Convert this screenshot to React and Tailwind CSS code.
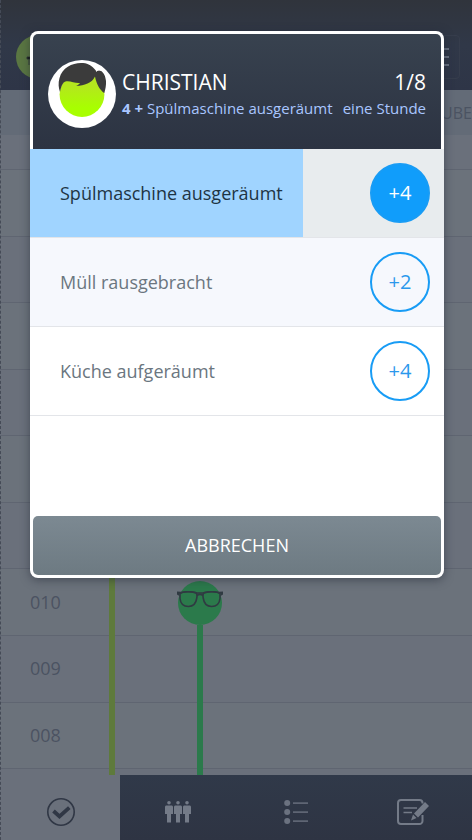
import React from "react";

const tasks = [
  { name: "Spülmaschine ausgeräumt", points: 4, progress: 66, active: true },
  { name: "Müll rausgebracht", points: 2, shaded: true },
  { name: "Küche aufgeräumt", points: 4 },
];

const scores = ["", "", "", "", "", "", "010", "009", "008"];

const Avatar = () => (
  <svg width="68" height="68" viewBox="0 0 68 68" className="shrink-0" aria-hidden="true">
    <defs>
      <linearGradient id="face" x1="0" y1="0" x2="0" y2="1">
        <stop offset="0.3" stopColor="#b4e61e" />
        <stop offset="0.8" stopColor="#a8ff00" />
      </linearGradient>
    </defs>
    <circle cx="34" cy="34" r="34" fill="#fff" />
    <circle cx="34" cy="34.5" r="22.4" fill="url(#face)" />
    <path
      fill="#3b3b3b"
      d="M12 32C10.500 28 10 23 11.500 18C14 8 24 3 33 3C39 3 43 5 46 8.500C47 9.500 47.800 10.500 48.500 11.500C49.500 10.500 51 10.200 52.500 10.800C55.500 12 57.500 16 58 21C58.200 25.500 57.500 29 56.300 33C53 31 50 26.500 48.500 22C47.800 20 47.300 18.500 47 16.500C45.500 20 43 22 39.500 23.500C36 25 32.500 25.800 28 26C29.500 25.300 31 24.500 32 23C27 23.500 22 20.500 17.500 21.500C14.500 22.500 13 27 12 32z"
    />
    <path d="M48 11.500C49.500 9.500 51.500 9.500 53 10.500" stroke="#fff" strokeWidth="0.8" fill="none" />
  </svg>
);

const GlassesHead = () => (
  <svg width="48" height="44" viewBox="0 0 48 44" aria-hidden="true">
    <circle cx="24" cy="22" r="22" fill="#2b7a4b" />
    <g fill="none" stroke="#303a42" strokeWidth="1.6">
      <path d="M4 12.500C7 10.300 15 10.300 19.500 11.500C21 12 21.300 14 20.800 17C20 22.500 17.500 25.500 12.500 25.500C7.500 25.500 4.500 22.500 4 17.500z" />
      <path d="M44 12.500C41 10.300 33 10.300 28.500 11.500C27 12 26.700 14 27.200 17C28 22.500 30.500 25.500 35.500 25.500C40.500 25.500 43.500 22.500 44 17.500z" />
      <path d="M21 14.500C23 13 25 13 27 14.500" />
    </g>
    <path
      d="M1 10.500L5 10.800C10 9.500 16 9.800 21 11.300H27C32 9.800 38 9.500 43 10.800L47 10.500V13.500L44.500 15V12.500C39 11 33 11 28 12.800H20C15 11 9 11 3.500 12.500V15L1 13.500z"
      fill="#303a42"
    />
  </svg>
);

const CheckIcon = () => (
  <svg width="28" height="28" viewBox="0 0 28 28" fill="none" stroke="#303745" aria-hidden="true">
    <circle cx="14" cy="14" r="13.200" strokeWidth="1.6" />
    <path d="M6.500 13l6 5.500 9.800-8.800" strokeWidth="3.8" />
  </svg>
);

const PeopleIcon = () => (
  <svg width="26" height="22" viewBox="0 0 26 22" fill="#747b88" aria-hidden="true">
    {[0, 9, 18].map((x) => (
      <g key={x} transform={`translate(${x} 0)`}>
        <circle cx="4" cy="1.8" r="1.8" />
        <path d="M1.500 4.500h5c.9 0 1.500.6 1.500 1.500v7H6v8.500H2V13H0V6c0-.9.6-1.500 1.500-1.500z" />
      </g>
    ))}
  </svg>
);

const ListIcon = () => (
  <svg width="24" height="24" viewBox="0 0 24 24" fill="#6b7280" aria-hidden="true">
    {[3, 12, 21].map((y) => (
      <g key={y}>
        <circle cx="3.2" cy={y} r="3" />
        <rect x="9" y={y - 0.6} width="15" height="1.4" />
      </g>
    ))}
  </svg>
);

const EditIcon = () => (
  <svg width="32" height="26" viewBox="0 0 32 26" aria-hidden="true">
    <path
      d="M25.500 4.500V4a3 3 0 0 0-3-3H4a3 3 0 0 0-3 3v18a3 3 0 0 0 3 3h18.500a3 3 0 0 0 3-3v-6"
      fill="none"
      stroke="#747b88"
      strokeWidth="2"
    />
    <path d="M6.500 9H20M6.500 13.500H15" stroke="#747b88" strokeWidth="1.5" />
    <path d="M28 3l4 4L21 18.500l-4-4zM16 15.500l3.500 3.500-5.500 2.500z" fill="#747b88" />
  </svg>
);

const Header = () => (
  <header className="flex h-[90px] items-center justify-between bg-linear-to-b from-[#30343c] via-[#303848] to-[#2e3547] pt-6 pr-3 pl-4">
    <svg width="44" height="44" viewBox="0 0 44 44" aria-hidden="true">
      <circle cx="22" cy="22" r="22" fill="#5a7642" />
      <path d="M11 22h8v2h-8zM13 24v6" stroke="#303a36" strokeWidth="1" />
    </svg>
    <button type="button" aria-label="Menü" className="flex h-11 w-14 flex-col items-end justify-center gap-1.5 rounded border border-[#363d4c] pr-2.5">
      <span className="h-0.5 w-6 bg-[#687080]" />
      <span className="h-0.5 w-6 bg-[#687080]" />
      <span className="h-0.5 w-6 bg-[#687080]" />
    </button>
  </header>
);

const Chart = () => (
  <main className="relative flex flex-1 flex-col bg-[#6a707b]">
    <div className="h-[35px] border-b border-[#5f6571]" />
    {scores.map((score, i) => (
      <div
        key={i}
        className="flex flex-[1_1_0px] items-center border-b border-[#5f6571] pl-[30px] text-[18px] text-[#4b5362] even:bg-[#6b727b]"
      >
        {score}
      </div>
    ))}
    <div className="h-1.5" />

    {/* score bars */}
    <div className="absolute inset-y-0 left-[68px] flex items-end">
      <div className="flex h-4/5 w-[88px] justify-center">
        <div className="w-1.5 bg-[#5e7a3c]" />
      </div>
      <div className="flex h-[194px] w-[88px] flex-col items-center">
        <GlassesHead />
        <div className="w-1.5 flex-1 bg-[#2b7a4b]" />
      </div>
    </div>
  </main>
);

const navItems = [
  { label: "Aufgaben", icon: <CheckIcon />, active: true },
  { label: "Gruppe", icon: <PeopleIcon /> },
  { label: "Liste", icon: <ListIcon /> },
  { label: "Bearbeiten", icon: <EditIcon /> },
];

const BottomNav = () => (
  <nav className="grid h-[65px] grid-cols-4 pl-0.5">
    {navItems.map((item) => (
      <button
        key={item.label}
        type="button"
        aria-label={item.label}
        className={`flex items-center justify-center pt-2 ${
          item.active ? "bg-[#6a707b]" : "bg-linear-to-b from-[#303949] to-[#2e3443]"
        }`}
      >
        {item.icon}
      </button>
    ))}
  </nav>
);

const TaskRow = ({ task }) => (
  <li
    className={`relative flex h-[89px] items-center justify-between border-b border-[#e3e5e9] pr-3.5 pl-[30px] ${
      task.active ? "bg-[#e8ecee]" : task.shaded ? "bg-[#f6f8fd]" : "bg-white"
    }`}
  >
    {task.progress && (
      <div className="absolute inset-y-0 left-0 bg-[#a0d4ff]" style={{ width: `${task.progress}%` }} />
    )}
    <span className={`relative text-[18px] ${task.active ? "text-[#1e3444]" : "text-[#6b7680]"}`}>{task.name}</span>
    <button
      type="button"
      className={`relative h-[60px] w-[60px] rounded-full border-2 border-[#189cf5] text-[20px] font-medium ${
        task.active ? "bg-[#109dfb] text-white" : "text-[#2b98ec]"
      }`}
    >
      +{task.points}
    </button>
  </li>
);

const TaskDialog = () => (
  <div className="absolute inset-x-0 top-0 pt-[31px] pr-7 pl-[30px]">
    <div
      role="dialog"
      aria-label="Christian"
      className="rounded-lg bg-white py-[3px] shadow-[0_2px_10px_rgba(30,35,50,0.5)]"
    >
      <div className="mx-[3px] flex h-[115px] items-center rounded-t-[5px] bg-linear-to-b from-[#38424f] to-[#2c3342] pt-1 pr-[15px] pl-[15px]">
        <Avatar />
        <div className="flex flex-1 items-center justify-between pl-1.5">
          <div>
            <h2 className="text-[21px] leading-7 text-white">CHRISTIAN</h2>
            <p className="text-[15px] leading-6 text-[#a9c6ff]">
              <b>4 +</b> Spülmaschine ausgeräumt
            </p>
          </div>
          <div className="text-right">
            <p className="text-[21px] leading-7 text-white">1/8</p>
            <p className="text-[15px] leading-6 text-[#a9c6ff]">eine Stunde</p>
          </div>
        </div>
      </div>
      <ul>
        {tasks.map((task) => (
          <TaskRow key={task.name} task={task} />
        ))}
      </ul>
      <div className="mx-[3px] pt-[100px]">
        <button
          type="button"
          className="h-[59px] w-full rounded-[5px] bg-linear-to-b from-[#7c8992] to-[#6d7a82] text-[18px] font-medium text-white"
        >
          ABBRECHEN
        </button>
      </div>
    </div>
  </div>
);

export default function App() {
  return (
    <div className="relative flex min-h-screen flex-col overflow-hidden bg-[#6a707b] font-['Open_Sans',sans-serif]">
      <Header />
      <div className="flex h-[45px] items-center justify-end bg-[#636b77] text-[16px] text-[#4b5362]">UBE</div>
      <Chart />
      <BottomNav />
      <div className="absolute inset-y-0 left-0 border-l border-dashed border-[#454b57]" />
      <TaskDialog />
    </div>
  );
}
